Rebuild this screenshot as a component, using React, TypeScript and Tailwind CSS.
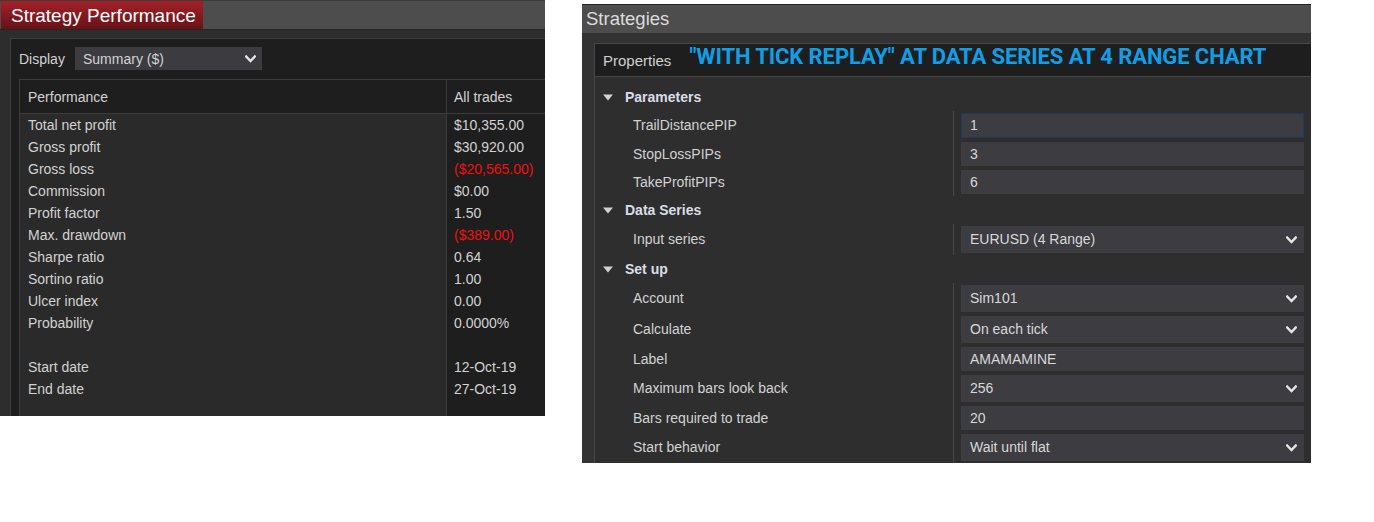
import React from "react";

const Chevron = ({ className = "" }: { className?: string }) => (
  <svg width="11" height="8" viewBox="0 0 11 8" className={className}>
    <polyline points="1.2,1.5 5.5,6 9.8,1.5" fill="none" stroke="#e6e6e6" strokeWidth="2.4" strokeLinecap="square" />
  </svg>
);

const Tri = () => (
  <svg width="10" height="7" viewBox="0 0 10 7">
    <polygon points="0,0.5 10,0.5 5,6.5" fill="#cfd3d8" />
  </svg>
);

const perf: [string, string, boolean][] = [
  ["Total net profit", "$10,355.00", false],
  ["Gross profit", "$30,920.00", false],
  ["Gross loss", "($20,565.00)", true],
  ["Commission", "$0.00", false],
  ["Profit factor", "1.50", false],
  ["Max. drawdown", "($389.00)", true],
  ["Sharpe ratio", "0.64", false],
  ["Sortino ratio", "1.00", false],
  ["Ulcer index", "0.00", false],
  ["Probability", "0.0000%", false],
  ["", "", false],
  ["Start date", "12-Oct-19", false],
  ["End date", "27-Oct-19", false],
];

type Row =
  | { kind: "section"; label: string }
  | { kind: "prop"; label: string; value: string; select?: boolean; tall?: boolean; focus?: boolean };

const rows: Row[] = [
  { kind: "section", label: "Parameters" },
  { kind: "prop", label: "TrailDistancePIP", value: "1", focus: true },
  { kind: "prop", label: "StopLossPIPs", value: "3" },
  { kind: "prop", label: "TakeProfitPIPs", value: "6" },
  { kind: "section", label: "Data Series" },
  { kind: "prop", label: "Input series", value: "EURUSD (4 Range)", select: true, tall: true },
  { kind: "section", label: "Set up" },
  { kind: "prop", label: "Account", value: "Sim101", select: true, tall: true },
  { kind: "prop", label: "Calculate", value: "On each tick", select: true, tall: true },
  { kind: "prop", label: "Label", value: "AMAMAMINE" },
  { kind: "prop", label: "Maximum bars look back", value: "256", select: true, tall: true },
  { kind: "prop", label: "Bars required to trade", value: "20" },
  { kind: "prop", label: "Start behavior", value: "Wait until flat", select: true, tall: true },
];

export default function App() {
  return (
    <div className="flex items-start w-[1374px] h-[522px] bg-white font-['Liberation_Sans',Arial,sans-serif] text-[14px] text-[#d2d2d2]">
      {/* Left panel */}
      <div className="w-[545px] h-[416px] shrink-0 flex flex-col bg-[#2d2d2d] overflow-hidden">
        <div className="h-[30px] bg-[#4d4d4d] border-t border-b border-t-[#3c3c3c] border-b-[#262626] flex items-stretch pl-[1px]">
          <div className="w-[202px] bg-gradient-to-b from-[#a52029] to-[#671217] text-white text-[19px] pl-[10px] flex items-center leading-none">
            Strategy Performance
          </div>
        </div>
        <div className="flex-1 flex flex-col pt-[8px] pl-[10px]">
          <div className="flex-1 flex flex-col bg-[#1e1e1e] border-l border-t border-[#3d3d3d] pl-[8px] pt-[8px]">
            <div className="flex items-center h-[23px]">
              <span className="w-[56px] pt-[2px]">Display</span>
              <div className="w-[187px] h-[23px] bg-[#3b3b40] flex items-center justify-between pl-[8px] pr-[6px]">
                <span className="pt-[2px]">Summary ($)</span>
                <Chevron />
              </div>
            </div>
            <div className="mt-[9px] flex-1 flex flex-col border-l border-t border-[#3c3c3c]">
              <div className="h-[34px] flex border-b border-[#3c3c3c]">
                <div className="w-[426px] pl-[8px] flex items-center pt-[2px]">Performance</div>
                <div className="flex-1 border-l border-[#3c3c3c] pl-[7px] flex items-center pt-[2px]">All trades</div>
              </div>
              <div className="flex-1 flex">
                <div className="w-[426px] bg-[#2a2a2a] pl-[8px]">
                  {perf.map(([l], i) => (
                    <div key={i} className="h-[22px] flex items-center">{l}</div>
                  ))}
                </div>
                <div className="flex-1 border-l border-[#3c3c3c] pl-[7px]">
                  {perf.map(([, v, red], i) => (
                    <div key={i} className={`h-[22px] flex items-center ${red ? "text-[#f01010]" : ""}`}>{v}</div>
                  ))}
                </div>
              </div>
            </div>
          </div>
        </div>
      </div>

      {/* Right panel */}
      <div className="ml-[37px] mt-[4px] w-[729px] h-[459px] shrink-0 flex flex-col bg-[#333333] border-t border-[#262626]">
        <div className="h-[28px] bg-[#4d4d4d] text-[18.5px] text-[#dcdcdc] pl-[4px] flex items-center">Strategies</div>
        <div className="flex-1 flex flex-col pl-[12px] pt-[10px]">
          <div className="flex-1 flex flex-col border-l border-t border-[#474747]">
            <div className="h-[33px] shrink-0 bg-[#1e1e1e] border-b border-[#454545] flex items-center pl-[8px]">
              <span className="text-[15px] text-[#d0d0d0] pt-[2px]">Properties</span>
              <span className="ml-[18px] mb-[6px] font-['Roboto',sans-serif] font-bold text-[22px] text-[#119ee6] tracking-[-0.1px] leading-none">
                "WITH TICK REPLAY" AT DATA SERIES AT 4 RANGE CHART
              </span>
            </div>
            <div className="flex-1 bg-[#2e2e2f] pt-[6px]">
              {rows.map((r, i) =>
                r.kind === "section" ? (
                  <div key={i} className="h-[28px] flex items-center pl-[8px]">
                    <Tri />
                    <span className="ml-[12px] font-bold text-[#d9dee6]">{r.label}</span>
                  </div>
                ) : (
                  <div key={i} className="flex items-stretch">
                    <div className="w-[358px] pl-[38px] flex items-center">{r.label}</div>
                    <div className="flex-1 border-l border-[#464646] pl-[7px] pr-[7px] py-[2px]">
                      <div
                        className={`${r.tall ? "h-[27px]" : r.focus ? "h-[25px]" : "h-[24px]"} bg-[#3c3c41] flex items-center justify-between pr-[7px] ${
                          r.focus ? "border border-[#1f3a62] pl-[8px]" : "pl-[9px]"
                        } text-[#d8d8d8]`}
                      >
                        <span>{r.value}</span>
                        {r.select && <Chevron />}
                      </div>
                    </div>
                  </div>
                )
              )}
            </div>
          </div>
        </div>
      </div>
    </div>
  );
}
